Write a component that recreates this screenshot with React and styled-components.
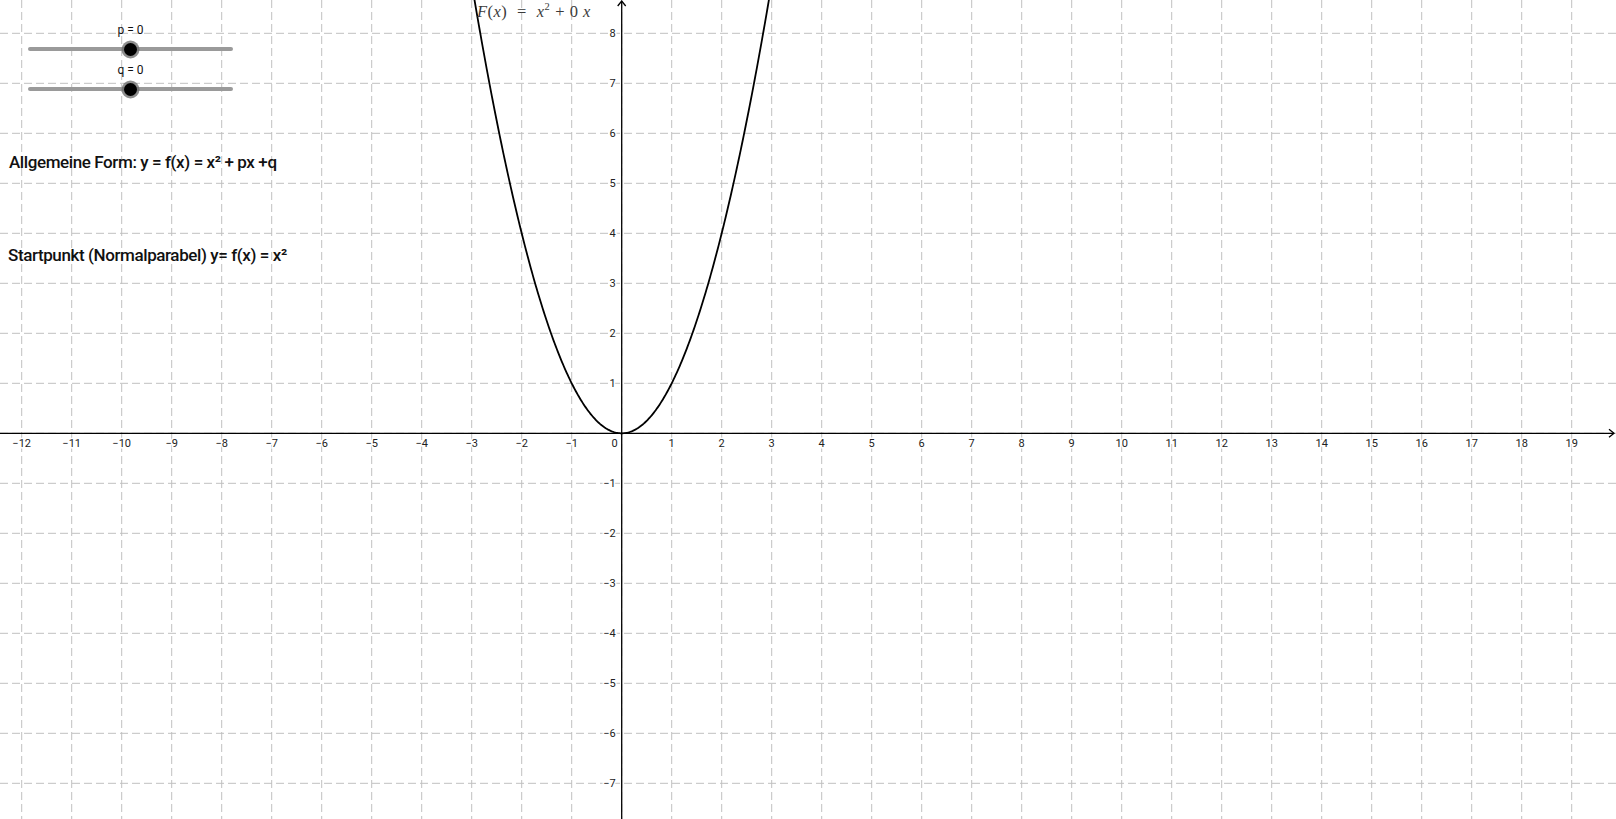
import React from "react";
import styled, { createGlobalStyle } from "styled-components";

const GlobalStyle = createGlobalStyle`
  html, body {
    margin: 0;
    padding: 0;
    background: #ffffff;
    overflow: hidden;
  }
`;

// view settings taken from the applet: origin in px and px per unit
const ORIGIN_X = 621.7;
const ORIGIN_Y = 433.3;
const UNIT = 50;
const WIDTH = 1616;
const HEIGHT = 819;

const sx = (x) => ORIGIN_X + x * UNIT;
const sy = (y) => ORIGIN_Y - y * UNIT;

const Canvas = styled.div`
  position: relative;
  width: ${WIDTH}px;
  height: ${HEIGHT}px;
  overflow: hidden;
  background: #ffffff;
`;

const GraphSvg = styled.svg`
  position: absolute;
  left: 0;
  top: 0;
  display: block;
`;

const TickLabel = styled.text`
  font-family: Roboto, "Liberation Sans", sans-serif;
  font-size: 11px;
  fill: #222222;
  stroke: #ffffff;
  stroke-width: 3px;
  paint-order: stroke;
`;

const FunctionLabel = styled.div`
  position: absolute;
  left: 477px;
  top: 2px;
  font-family: "Liberation Serif", "DejaVu Serif", serif;
  font-size: 16.5px;
  color: #3a3a3a;
  white-space: nowrap;
  letter-spacing: 0.4px;

  i {
    font-style: italic;
  }
  sup {
    font-size: 10.5px;
    vertical-align: 7px;
    line-height: 0;
  }
`;

const Eq = styled.span`
  margin: 0 10px;
`;

const Op = styled.span`
  margin: 0 5px;
`;

/* left-hand column of the applet: sliders and text objects */
const Sidebar = styled.div`
  position: absolute;
  left: 0;
  top: 0;
  display: flex;
  flex-direction: column;
  padding-top: 23px;
`;

const SliderGroup = styled.div`
  display: flex;
  flex-direction: column;
  gap: 6px;
  padding-left: 28px;
`;

const TextGroup = styled.div`
  display: flex;
  flex-direction: column;
  gap: 73px;
  margin-top: 55px;
  padding-left: 9px;
`;

const TextItem = styled.div`
  font-family: Roboto, "Liberation Sans", sans-serif;
  font-weight: 500;
  font-size: 17px;
  line-height: 20px;
  letter-spacing: -0.4px;
  color: #111111;
  white-space: nowrap;
  margin-left: ${({ $shift }) => $shift || 0}px;
`;

const SliderBox = styled.div`
  display: flex;
  flex-direction: column;
  width: ${({ $w }) => $w}px;
`;

const CaptionRow = styled.div`
  position: relative;
  height: 14px;
`;

const SliderCaption = styled.span`
  position: absolute;
  top: 0;
  transform: translateX(-50%);
  font-family: Roboto, "Liberation Sans", sans-serif;
  font-size: 12px;
  line-height: 14px;
  color: #111111;
  white-space: nowrap;
`;

const TrackArea = styled.div`
  position: relative;
  height: 16px;
  margin-top: 4px;
  display: flex;
  align-items: center;
`;

const Track = styled.div`
  flex: 1;
  height: 4px;
  border-radius: 2px;
  background: #9a9a9a;
`;

const Knob = styled.div`
  position: absolute;
  top: 50%;
  width: 13px;
  height: 13px;
  margin: -6.5px 0 0 -6.5px;
  border-radius: 50%;
  background: #000000;
  box-shadow: 0 0 0 2.5px rgba(105, 105, 105, 0.75);
`;

const Slider = ({ name, value, min, max, width }) => {
  const pct = ((value - min) / (max - min)) * 100;
  return (
    <SliderBox $w={width}>
      <CaptionRow>
        <SliderCaption style={{ left: `${pct}%` }}>
          {name} = {value}
        </SliderCaption>
      </CaptionRow>
      <TrackArea>
        <Track />
        <Knob style={{ left: `${pct}%` }} />
      </TrackArea>
    </SliderBox>
  );
};

const range = (a, b) => {
  const out = [];
  for (let i = a; i <= b; i++) out.push(i);
  return out;
};

const fmt = (n) => (n < 0 ? `\u2212${-n}` : `${n}`);

const Graph = () => {
  const xs = range(-12, 19);
  const ys = range(-7, 8);

  const pts = [];
  for (let x = -3.1; x <= 3.1; x += 0.02) {
    pts.push(`${sx(x).toFixed(2)},${sy(x * x).toFixed(2)}`);
  }

  return (
    <GraphSvg width={WIDTH} height={HEIGHT} viewBox={`0 0 ${WIDTH} ${HEIGHT}`}>
      <g stroke="#c0c0c0" strokeWidth="1" strokeDasharray="8 4">
        {xs.map((i) => (
          <line key={`gx${i}`} x1={sx(i)} y1={0} x2={sx(i)} y2={HEIGHT} />
        ))}
        {ys.map((j) => (
          <line key={`gy${j}`} x1={0} y1={sy(j)} x2={WIDTH} y2={sy(j)} />
        ))}
      </g>

      <g stroke="#000000" strokeWidth="1.3" fill="none">
        <line x1={0} y1={ORIGIN_Y} x2={WIDTH - 2} y2={ORIGIN_Y} />
        <line x1={ORIGIN_X} y1={1} x2={ORIGIN_X} y2={HEIGHT} />
        <polyline points={`${WIDTH - 7},${ORIGIN_Y - 4} ${WIDTH - 2},${ORIGIN_Y} ${WIDTH - 7},${ORIGIN_Y + 4}`} />
        <polyline points={`${ORIGIN_X - 4},6 ${ORIGIN_X},1 ${ORIGIN_X + 4},6`} />
      </g>

      {xs
        .filter((i) => i !== 0)
        .map((i) => (
          <TickLabel key={`lx${i}`} x={sx(i)} y={ORIGIN_Y + 14} textAnchor="middle">
            {fmt(i)}
          </TickLabel>
        ))}
      <TickLabel x={ORIGIN_X - 4} y={ORIGIN_Y + 14} textAnchor="end">
        0
      </TickLabel>
      {ys
        .filter((j) => j !== 0)
        .map((j) => (
          <TickLabel key={`ly${j}`} x={ORIGIN_X - 6} y={sy(j) + 4} textAnchor="end">
            {fmt(j)}
          </TickLabel>
        ))}

      <polyline
        points={pts.join(" ")}
        fill="none"
        stroke="#000000"
        strokeWidth="1.8"
        strokeLinejoin="round"
      />
    </GraphSvg>
  );
};

export default function App() {
  return (
    <>
      <GlobalStyle />
      <Canvas>
        <Graph />
        <FunctionLabel>
          <i>F</i>(<i>x</i>)<Eq>=</Eq>
          <i>x</i>
          <sup>2</sup>
          <Op>+</Op>0 <i>x</i>
        </FunctionLabel>
        <Sidebar>
          <SliderGroup>
            <Slider name="p" value={0} min={-5} max={5} width={205} />
            <Slider name="q" value={0} min={-5} max={5} width={205} />
          </SliderGroup>
          <TextGroup>
            <TextItem>Allgemeine Form: y = f(x) = x² + px +q</TextItem>
            <TextItem $shift={-1}>Startpunkt (Normalparabel) y= f(x) = x²</TextItem>
          </TextGroup>
        </Sidebar>
      </Canvas>
    </>
  );
}
